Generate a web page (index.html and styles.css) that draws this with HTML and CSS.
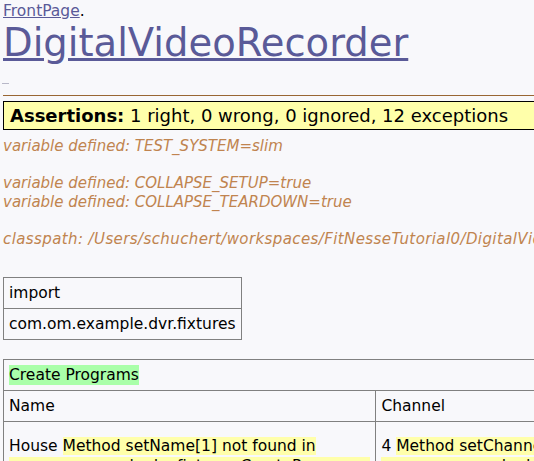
FILE: index.html
```html
<!DOCTYPE html>
<html>
<head>
<meta charset="utf-8">
<title>DigitalVideoRecorder</title>
<link rel="stylesheet" href="styles.css">
</head>
<body>
<div class="page">
  <header class="header">
    <div class="crumbs"><a href="#">FrontPage</a>.</div>
    <h1 class="title"><a href="#">DigitalVideoRecorder</a></h1>
    <div class="tiny"><a href="#" class="tiny-link"></a></div>
  </header>
  <main class="main">
    <div class="summary"><strong>Assertions:</strong> 1 right, 0 wrong, 0 ignored, 12 exceptions</div>
    <div class="metas">
      <span class="meta">variable defined: TEST_SYSTEM=slim</span>
      <span class="meta gap">variable defined: COLLAPSE_SETUP=true</span>
      <span class="meta">variable defined: COLLAPSE_TEARDOWN=true</span>
      <span class="meta gap path">classpath: /Users/schuchert/workspaces/FitNesseTutorial0/DigitalVideoRecorder/bin</span>
    </div>
    <table class="tbl import-tbl">
      <tr><td>import</td></tr>
      <tr><td>com.om.example.dvr.fixtures</td></tr>
    </table>
    <table class="tbl programs">
      <tr><td colspan="2"><span class="pass">Create Programs</span></td></tr>
      <tr><td class="col-name">Name</td><td>Channel</td></tr>
      <tr class="result-row"><td class="col-name">House <span class="error">Method setName[1] not found in com.om.example.dvr.fixtures.CreatePrograms.</span></td><td>4 <span class="error">Method setChannel[1] not found in com.om.example.dvr.fixtures.CreatePrograms.</span></td></tr>
    </table>
  </main>
</div>
</body>
</html>
```
FILE: styles.css
```css
html, body {
  margin: 0;
  padding: 0;
  overflow: hidden;
  background: #f8f8fb;
}
body {
  font-family: "DejaVu Sans", Verdana, sans-serif;
  font-size: 15.5px;
  color: #000;
}
.page {
  width: 760px;
  padding: 0 3px;
}
a {
  color: #5a5a98;
}
.header {
  display: flex;
  flex-direction: column;
}
.crumbs {
  font-size: 15.5px;
  line-height: 18px;
  padding-top: 2px;
}
.title {
  margin: 1px 0 0 0;
  font-size: 38.5px;
  font-weight: normal;
  line-height: 44px;
}
.tiny {
  height: 1px;
  margin-top: 18px;
}
.tiny-link {
  display: block;
  width: 7px;
  height: 1px;
  margin-left: -1px;
  background: #b8b8c8;
}
.main {
  border-top: 1px solid #996633;
  margin-top: 11px;
  padding-top: 5px;
}
.summary {
  background: #ffffaa;
  border: 1px solid #000;
  font-size: 18px;
  line-height: 27px;
  padding: 0 6px;
}
.metas {
  display: flex;
  flex-direction: column;
  align-items: flex-start;
  margin-top: 7px;
}
.meta {
  color: #c0844f;
  font-style: italic;
  font-size: 15px;
  line-height: 18.6px;
  white-space: nowrap;
}
.meta.gap {
  margin-top: 18.6px;
}
.meta.path {
  letter-spacing: 0.4px;
}
.tbl {
  border-collapse: collapse;
  margin-top: 19px;
}
.tbl td {
  border: 1px solid #808080;
  padding: 5px 5px;
  line-height: 20px;
  vertical-align: top;
}
.import-tbl {
  margin-top: 28px;
}
.programs {
  width: 740px;
}
.programs .col-name {
  width: 354px;
}
.result-row td {
  padding-top: 14px;
}
.pass {
  background: #aaffaa;
  display: inline-block;
}
.error {
  background: #ffffaa;
}
```
